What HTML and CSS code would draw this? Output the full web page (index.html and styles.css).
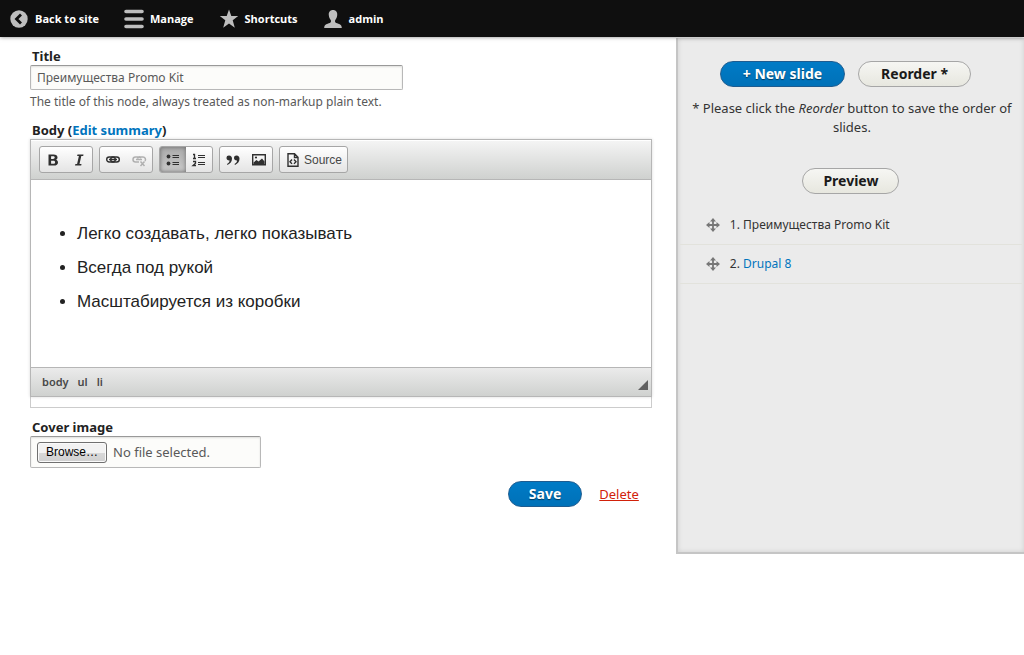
FILE: index.html
```html
<!DOCTYPE html>
<html lang="en">
<head>
<meta charset="utf-8">
<meta name="viewport" content="width=device-width, initial-scale=1">
<title>Edit slide</title>
<link rel="stylesheet" href="styles.css">
</head>
<body>
<nav class="admin-bar" aria-label="Administration">
  <a class="admin-link admin-back" href="#"><svg class="admin-icon" viewBox="0 0 20 20" aria-hidden="true"><circle cx="10" cy="10" r="8.7" fill="#bebebe"/><path d="M12 5.5 7.5 10l4.500 4.500" fill="none" stroke="#0f0f0f" stroke-width="2.800"/></svg>Back to site</a>
  <a class="admin-link admin-manage" href="#"><svg class="admin-icon" viewBox="0 0 20 20" aria-hidden="true"><path d="M2 2.500h16M2 10h16M2 17.500h16" stroke="#bebebe" stroke-width="3.600" stroke-linecap="round"/></svg>Manage</a>
  <a class="admin-link admin-shortcuts" href="#"><svg class="admin-icon" viewBox="0 0 20 20" aria-hidden="true"><path d="m10 .5 2.300 6.500h6.900l-5.500 4.300 2.100 7.500L10 14.500l-5.800 4.300 2.100-7.500L.8 7h6.900z" fill="#bebebe"/></svg>Shortcuts</a>
  <a class="admin-link" href="#"><svg class="admin-icon" viewBox="0 0 20 20" aria-hidden="true"><path d="M10 1c3 0 4.500 2.200 4.200 5.200-.2 2.300-1 3.600-1.900 4.800-.6 1-.3 2.500.9 3 2.800 1 5.600 1.300 5.600 5H1.200c0-3.700 2.800-4 5.600-5 1.200-.5 1.500-2 .9-3-.9-1.200-1.700-2.500-1.900-4.800C5.500 3.200 7 1 10 1z" fill="#bebebe"/></svg>admin</a>
</nav>
<div class="layout">
  <main class="main">
    <form class="node-form">
      <div class="field">
        <label class="field-label" for="title">Title</label>
        <input class="text-input" id="title" type="text" value="Преимущества Promo Kit">
        <p class="description">The title of this node, always treated as non-markup plain text.</p>
      </div>
      <div class="field">
        <div class="field-label">Body (<a class="link" href="#">Edit summary</a>)</div>
        <div class="editor-frame">
          <div class="editor">
            <div class="toolbar" role="toolbar" aria-label="Editor toolbar">
              <div class="tool-group">
                <button class="tool" type="button" aria-label="Bold"><svg class="tool-icon" viewBox="0 0 16 16"><path fill-rule="evenodd" d="M3.500 2.500h5c2.600 0 4 1.100 4 2.900 0 1.200-.6 2-1.700 2.400 1.400.3 2.200 1.300 2.200 2.600 0 2-1.500 3.100-4.200 3.100H3.500zm2.600 1.800v2.700h1.900c1.100 0 1.700-.5 1.700-1.400S9.100 4.300 8 4.300zm0 4.400v3h2.200c1.200 0 1.800-.5 1.800-1.500s-.6-1.500-1.800-1.500z"/></svg></button>
                <button class="tool" type="button" aria-label="Italic"><svg class="tool-icon" viewBox="0 0 16 16"><path d="M6.500 2.500h6l-.3 1.600h-1.900l-1.800 7.800h2l-.3 1.600H4l.4-1.600h1.700l1.800-7.800H6.100z"/></svg></button>
              </div>
              <div class="tool-group">
                <button class="tool" type="button" aria-label="Link"><svg class="tool-icon" viewBox="0 0 16 16"><g fill="none" stroke="#303030" stroke-width="1.400"><rect x="1.700" y="5" width="8.600" height="5" rx="2.500"/><rect x="5.700" y="5" width="8.600" height="5" rx="2.500"/><path d="M4 7.500h8" stroke-width="1.300"/></g></svg></button>
                <button class="tool" type="button" aria-label="Unlink" disabled><svg class="tool-icon" viewBox="0 0 16 16"><g fill="none" stroke="#b0b0b0" stroke-width="1.500"><path d="M8 10H4.500a2.500 2.500 0 0 1 0-5H8a2.500 2.500 0 0 1 2 1M6.500 6.500A2.500 2.500 0 0 1 8.500 5H12a2.500 2.500 0 0 1 2 4M5 7.500h6M9.500 9.500l4 4.500M13.500 9.500l-4 4.500"/></g></svg></button>
              </div>
              <div class="tool-group">
                <button class="tool tool-active" type="button" aria-label="Bulleted list" aria-pressed="true"><svg class="tool-icon" viewBox="0 0 16 16"><circle cx="3.500" cy="4.500" r="1.900"/><circle cx="3.500" cy="11.500" r="1.900"/><path d="M7.500 3.500H14M7.500 5.500H14M7.500 10.500H14M7.500 12.500H14" stroke="#303030"/></svg></button>
                <button class="tool" type="button" aria-label="Numbered list"><svg class="tool-icon" viewBox="0 0 16 16"><path d="M7 3.500h7M7 5.500h7M7 10.500h7M7 12.500h7" stroke="#303030"/><path d="M2 2.500h1.500v4M2 6.500h3M2 9.500h2.500v1.700L2 13.500h3" fill="none" stroke="#303030" stroke-width="1.300"/></svg></button>
              </div>
              <div class="tool-group">
                <button class="tool" type="button" aria-label="Block quote"><svg class="tool-icon" viewBox="0 0 16 16"><path d="M4 3.500c2 0 3 1.300 3 3.300C7 9.500 5.300 11.700 2.500 13l-.5-1c1.700-1.100 2.500-2 2.600-3.500C2.800 8.700 1.500 7.700 1.500 6S2.500 3.500 4 3.500zM11.500 3.500c2 0 3 1.300 3 3.300 0 2.700-1.700 4.900-4.500 6.200l-.5-1c1.700-1.100 2.500-2 2.600-3.500C10.300 8.700 9 7.700 9 6s1-2.500 2.500-2.500z"/></svg></button>
                <button class="tool" type="button" aria-label="Image"><svg class="tool-icon" viewBox="0 0 16 16"><path d="M1.700 2.700h12.600v10H1.700z" fill="none" stroke="#303030" stroke-width="1.400"/><path d="M2.500 12.500v-2l3-2.500 2 1.500 3.500-3 2.500 3v3z"/><circle cx="5" cy="5.500" r="1.100"/></svg></button>
              </div>
              <div class="tool-group">
                <button class="tool tool-source" type="button"><svg class="tool-icon" viewBox="0 0 16 16" aria-hidden="true"><path d="M3 1.700h6.500L13 5.200v9.100H3z M9.500 2v3.500H13" fill="none" stroke="#303030" stroke-width="1.400"/><path d="M7 7.500 5 9.700l2 2.200M9 7.500l2 2.200-2 2.200" fill="none" stroke="#303030" stroke-width="1.400"/></svg>Source</button>
              </div>
            </div>
            <div class="editor-content" contenteditable="true" role="textbox" aria-multiline="true" aria-label="Body">
              <ul class="editor-list">
                <li>Легко создавать, легко показывать</li>
                <li>Всегда под рукой</li>
                <li>Масштабируется из коробки</li>
              </ul>
            </div>
            <div class="editor-footer">
              <div class="element-path"><a href="#">body</a><a href="#">ul</a><a href="#">li</a></div>
              <svg class="resizer" viewBox="0 0 10 10" aria-hidden="true"><path d="M10 0v10H0z" fill="#606060"/></svg>
            </div>
          </div>
        </div>
      </div>
      <div class="field field-file">
        <label class="field-label" for="cover">Cover image</label>
        <label class="file-box" for="cover"><input class="file-input" id="cover" type="file"><span class="browse">Browse…</span><span>No file selected.</span></label>
      </div>
      <div class="actions">
        <button class="button button-primary" type="submit">Save</button>
        <a class="delete-link" href="#">Delete</a>
      </div>
    </form>
  </main>
  <aside class="sidebar">
    <div class="slide-actions">
      <button class="button button-primary button-wide" type="button">+ New slide</button>
      <button class="button button-wide" type="button">Reorder *</button>
    </div>
    <p class="hint">* Please click the <em>Reorder</em> button to save the order of slides.</p>
    <div class="preview"><button class="button" type="button">Preview</button></div>
    <ol class="slides">
      <li class="slide"><svg class="move" viewBox="0 0 14 14" aria-hidden="true"><path d="M7 2v10M2 7h10" stroke="#777" stroke-width="1.800"/><path d="m7 0 3 3.500H4zM7 14l-3-3.500h6zM0 7l3.500-3v6zM14 7l-3.500 3V4z" fill="#777"/></svg><span>1. Преимущества Promo Kit</span></li>
      <li class="slide"><svg class="move" viewBox="0 0 14 14" aria-hidden="true"><path d="M7 2v10M2 7h10" stroke="#777" stroke-width="1.800"/><path d="m7 0 3 3.500H4zM7 14l-3-3.500h6zM0 7l3.500-3v6zM14 7l-3.500 3V4z" fill="#777"/></svg><span>2. <a class="link" href="#">Drupal 8</a></span></li>
    </ol>
  </aside>
</div>
</body>
</html>
```
FILE: styles.css
```css
* { box-sizing: border-box; }

body {
  margin: 0;
  background: #fff;
  color: #333;
  font: 12px/18px "Noto Sans", "Open Sans", sans-serif;
}

p, ul, ol { margin: 0; padding: 0; }
button, input { font: inherit; }
.link { color: #0074bd; text-decoration: none; }

.admin-bar {
  display: flex;
  align-items: center;
  gap: 25px;
  height: 37px;
  padding: 0 9px;
  background: #0f0f0f;
  box-shadow: 0 0 4px rgba(0, 0, 0, 0.5);
  position: relative;
}
.admin-link {
  display: flex;
  align-items: center;
  gap: 6px;
  color: #fff;
  font-family: "Open Sans", sans-serif;
  font-size: 11px;
  font-weight: 700;
  text-decoration: none;
}
.admin-icon { width: 20px; height: 20px; }

.layout {
  display: grid;
  grid-template-columns: 1fr 34%;
  padding-top: 1px;
}
.main { padding: 9px 24px 40px 30px; }
.node-form { display: flex; flex-direction: column; gap: 10px; }
.field-label {
  display: block;
  padding-left: 2px;
  color: #222;
  font-size: 13px;
  font-weight: 700;
}
.text-input {
  display: block;
  width: 60%;
  height: 25px;
  padding: 0 6px;
  border: 1px solid #b8b8b8;
  border-top-color: #999;
  border-radius: 2px;
  background: #fcfcfa;
  box-shadow: inset 0 1px 2px rgba(0, 0, 0, 0.12);
  color: #595959;
  font-size: 12px;
}
.description { margin-top: 3px; color: #595959; font-size: 12px; }

.editor-frame { padding-bottom: 10px; border: 1px solid #ccc; border-top: 0; }
.editor {
  margin: 0 -1px;
  border: 1px solid #b6b6b6;
  box-shadow: 0 0 3px rgba(0, 0, 0, 0.15);
}
.toolbar {
  display: flex;
  gap: 6px;
  padding: 6px 8px;
  border-bottom: 1px solid #b6b6b6;
  background: linear-gradient(#f5f5f5, #cfd1cf);
  box-shadow: inset 0 1px 0 #fff;
}
.tool-group {
  display: flex;
  height: 27px;
  border: 1px solid #a6a6a6;
  border-radius: 3px;
  background: linear-gradient(#fff, #e4e4e4);
  overflow: hidden;
}
.tool {
  display: flex;
  align-items: center;
  justify-content: center;
  gap: 4px;
  min-width: 26px;
  padding: 0 5px;
  border: 0;
  background: transparent;
  color: #474747;
  font-family: "Liberation Sans", sans-serif;
  font-size: 12px;
}
.tool-active { background: linear-gradient(#aaa, #cacaca); box-shadow: inset 0 0 4px #666; }
.tool-icon { width: 16px; height: 16px; fill: #303030; }
.tool-source { gap: 3px; }
.editor-content { min-height: 187px; padding: 37px 20px 35px 46px; color: #222; outline: 0; }
.editor-list { font: 17px/34px "Liberation Sans", sans-serif; padding-left: 0; }
.editor-footer {
  display: flex;
  justify-content: space-between;
  align-items: center;
  height: 29px;
  padding: 0 3px 0 11px;
  border-top: 1px solid #b6b6b6;
  background: linear-gradient(#ebebeb, #cfd1cf);
}
.element-path { display: flex; gap: 9px; }
.element-path a {
  color: #484848;
  font-size: 11px;
  font-weight: 600;
  text-decoration: none;
}
.resizer { width: 10px; height: 10px; margin-top: 5px; }

.file-box {
  display: flex;
  align-items: center;
  gap: 6px;
  width: 231px;
  height: 32px;
  padding: 0 6px;
  border: 1px solid #b8b8b8;
  border-top-color: #999;
  border-radius: 2px;
  background: #fcfcfa;
  box-shadow: inset 0 1px 2px rgba(0, 0, 0, 0.12);
  color: #595959;
  font-size: 13px;
}
.file-input { position: absolute; width: 1px; height: 1px; opacity: 0; }
.browse {
  width: 70px;
  border: 1px solid #707070;
  border-radius: 3px;
  background: linear-gradient(#f2f2f2 50%, #d8d8d8 51%, #d0d0d0);
  box-shadow: inset 0 0 0 1px #fafafa;
  color: #000;
  font: 12px/19px "Liberation Sans", sans-serif;
  text-align: center;
}
.actions {
  display: flex;
  justify-content: flex-end;
  align-items: center;
  gap: 17px;
  margin-top: 3px;
  padding-right: 13px;
}
.button {
  height: 26px;
  padding: 0 20px;
  border: 1px solid #a6a6a6;
  border-radius: 13px;
  background: linear-gradient(#f6f6f3, #e7e7df);
  color: #1a1a1a;
  font-size: 14px;
  font-weight: 700;
  line-height: 22px;
}
.button-wide { padding: 0 22px; }
.button-primary {
  border-color: #1e5c90;
  background: linear-gradient(#007bc6, #0071b8);
  color: #fff;
  text-shadow: 0 1px 1px rgba(0, 0, 0, 0.5);
}
.delete-link { color: #d1210a; font-size: 13px; }

.sidebar {
  min-height: 516px;
  padding-top: 23px;
  border: solid #c5c5c5;
  border-width: 0 0 2px 2px;
  background: #ebebeb;
  box-shadow: inset 0 0 5px rgba(0, 0, 0, 0.12);
}
.slide-actions { display: flex; justify-content: center; gap: 13px; padding-right: 11px; }
.hint {
  margin-top: 12px;
  padding: 0 10px 0 12px;
  font-size: 13px;
  line-height: 19px;
  text-align: center;
}
.preview { display: flex; justify-content: center; margin-top: 31px; }
.slides { margin-top: 12px; padding: 0 2px; list-style: none; }
.slide {
  display: flex;
  align-items: center;
  gap: 10px;
  height: 39px;
  padding-left: 26px;
  border-bottom: 1px solid #e2e2dc;
}
.move { width: 14px; height: 14px; }
```
